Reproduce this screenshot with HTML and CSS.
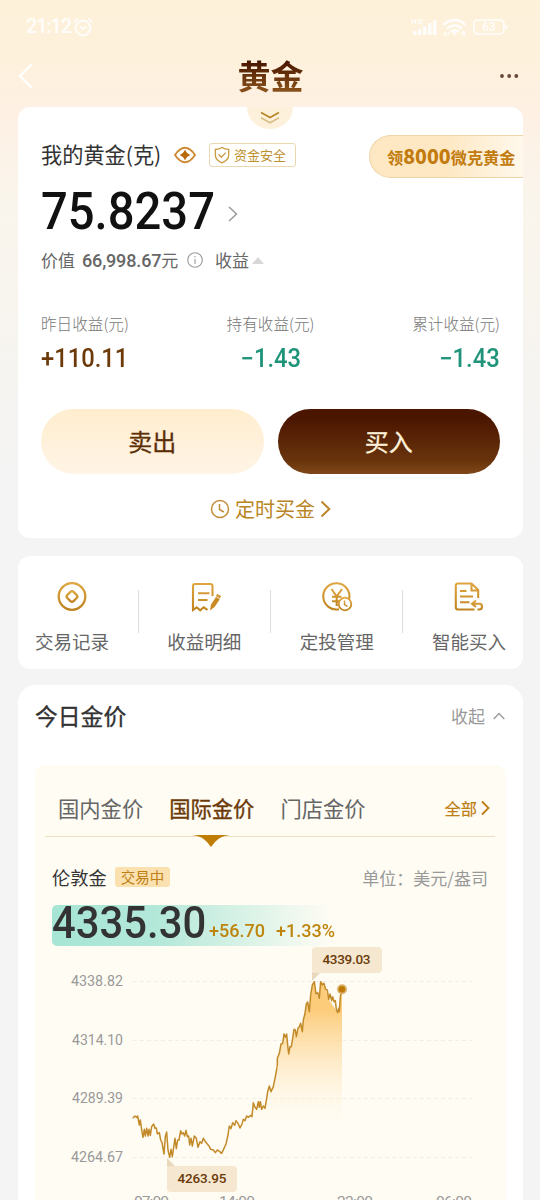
FILE: index.html
```html
<!DOCTYPE html>
<html lang="zh-CN">
<head>
<meta charset="utf-8">
<title>黄金</title>
<link rel="stylesheet" href="styles.css">
</head>
<body>
<svg class="defs" width="0" height="0">
  <defs>
    <linearGradient id="gold" x1="0" y1="0" x2="0" y2="1"><stop offset="0" stop-color="#dfa540"/><stop offset="1" stop-color="#bf8420"/></linearGradient>
  </defs>
</svg>
<div class="screen">
  <div class="status">
    <span class="time">21:12</span>
    <svg class="alarm" width="20" height="20" viewBox="0 0 20 20" fill="none" stroke="#fff" stroke-width="1.8" stroke-linecap="round"><circle cx="10" cy="11" r="7.3"/><path d="M1.2 4.8 4.4 1.8M18.8 4.8 15.6 1.8M7.4 10l2.6 2 2.8-2"/></svg>
    <svg class="signals" width="100" height="22" viewBox="0 0 100 22" fill="#fff">
      <text x="0" y="8" font-size="8" font-weight="700" textLength="12">HD</text>
      <rect x="2" y="15" width="3.500" height="4" rx="1"/><rect x="7" y="13" width="3.500" height="6" rx="1"/><rect x="12" y="10" width="3.500" height="9" rx="1"/><rect x="17" y="7" width="3.500" height="12" rx="1"/><rect x="22" y="4" width="3.500" height="15" rx="1"/>
      <g fill="none" stroke="#fff" stroke-width="2.500"><path d="M32.500 9Q43.500-1 54.500 9M36 12.500q7.500-6.500 15 0M39.500 16q4-3.500 8 0"/></g><circle cx="43.500" cy="17.500" r="1.800"/>
      <text x="32" y="20" font-size="6" font-weight="700">47</text><text x="50" y="20" font-size="8" font-weight="700">6</text>
      <rect x="63" y="4" width="30" height="14" rx="4" fill="none" stroke="#fff" stroke-width="1.700"/><rect x="94.500" y="9" width="2" height="4" rx="1"/>
      <text x="71" y="15.300" font-size="12" font-weight="500">63</text>
    </svg>
  </div>
  <header class="header">
    <svg width="16" height="26" viewBox="0 0 16 26" fill="none" stroke="#fff" stroke-width="2.300"><path d="M13.500 1.200 2 13l11.500 11.700"/></svg>
    <h1 class="title">黄金</h1>
    <svg width="20" height="6" viewBox="0 0 20 6" fill="#674737"><circle cx="3" cy="3" r="1.900"/><circle cx="10.200" cy="3" r="1.900"/><circle cx="17.300" cy="3" r="1.900"/></svg>
  </header>

  <section class="card account">
    <div class="pull"><svg width="20" height="14" viewBox="0 0 20 14" fill="none" stroke-width="1.600"><path d="m1 1.500 9 5 9-5" stroke="#b98422"/><path d="m1 6.800 9 5 9-5" stroke="#d9bd88"/></svg></div>
    <div class="owner">
      <div class="owner-left">
        <span class="owner-name">我的黄金(克)</span>
        <svg class="eye" width="24" height="20" viewBox="0 0 24 20"><path d="M2 10C6 4 9 2.800 12 2.800S18 4 22 10c-4 6-7 7.200-10 7.200S6 16 2 10Z" fill="none" stroke="#ce8a35" stroke-width="1.900"/><path d="M12 5.500 13.700 8.300 16.500 10 13.700 11.700 12 14.500 10.300 11.700 7.500 10 10.300 8.300Z" fill="#b96908" stroke="#b96908"/></svg>
        <span class="safe"><svg width="16" height="18" viewBox="0 0 16 18" fill="none" stroke="#c99b3f" stroke-width="1.300"><path d="M8 1.500Q11 3.400 14.700 3.300V9q0 5-6.700 7.800Q1.300 14 1.300 9V3.300Q5 3.400 8 1.500Z"/><path d="m4.600 8.300 2.700 2.900 4.500-4.600"/></svg><span class="safe-text">资金安全</span></span>
      </div>
      <span class="promo">领<b>8000</b>微克黄金</span>
    </div>
    <div class="balance"><span class="balance-num">75.8237</span><svg width="10" height="16" viewBox="0 0 10 16" fill="none" stroke="#999" stroke-width="1.500"><path d="m1 1 7.500 7L1 15"/></svg></div>
    <div class="worth">
      <span>价值</span><span class="worth-num"><b>66,998.67</b>元</span>
      <svg class="info" width="16" height="16" viewBox="0 0 16 16" fill="none" stroke="#999" stroke-width="1.100"><circle cx="8" cy="8" r="7.300"/><path d="M8 7v5M8 4v1.500"/></svg>
      <span class="gain">收益</span><i class="tri"></i>
    </div>
    <div class="stats">
      <div class="stat"><span class="stat-label">昨日收益(元)</span><span class="stat-num up">+110.11</span></div>
      <div class="stat mid"><span class="stat-label">持有收益(元)</span><span class="stat-num">−1.43</span></div>
      <div class="stat end"><span class="stat-label">累计收益(元)</span><span class="stat-num">−1.43</span></div>
    </div>
    <div class="actions"><div class="btn sell">卖出</div><div class="btn buy">买入</div></div>
    <div class="timed">
      <svg width="20" height="20" viewBox="0 0 20 20" fill="none" stroke="#c18e3a" stroke-width="1.500"><circle cx="10" cy="10" r="8.500"/><path d="M9.500 5v5.500l4.300 2.500"/></svg>
      <span class="timed-text">定时买金</span>
      <svg width="11" height="18" viewBox="0 0 11 18" fill="none" stroke="#bd862b" stroke-width="2"><path d="m1.500 1.500 7.800 7.500-7.800 7.500"/></svg>
    </div>
  </section>

  <section class="card tools">
    <div class="tool">
      <svg width="34" height="34" viewBox="0 0 34 34" fill="none" stroke="url(#gold)" stroke-width="2.300"><circle cx="17" cy="16.500" r="13.300"/><path d="M15.500 11.900q1.500-1.500 3 0l3.200 3.100q1.500 1.500 0 3l-3.200 3.100q-1.500 1.500-3 0L12.300 18q-1.500-1.500 0-3Z"/></svg>
      <span>交易记录</span>
    </div><i class="bar"></i>
    <div class="tool">
      <svg width="34" height="34" viewBox="0 0 34 34" fill="none" stroke="url(#gold)" stroke-width="2.100"><path d="M25.500 16V6q0-2-2-2H8Q6 4 6 6v24l3.700-2.700 3.500 3 3.500-3 3.800 2.500M11 13.200h11.500M11 20h9.500"/><path d="m23 30.500 1-6 5-7.500 3.800 2.200-5.200 7.800Z" fill="#c88a22" stroke="none"/><path d="m29.500 15 4 2.300" stroke="#d59d42" stroke-width="2.700"/></svg>
      <span>收益明细</span>
    </div><i class="bar"></i>
    <div class="tool">
      <svg width="34" height="34" viewBox="0 0 34 34" fill="none" stroke="url(#gold)" stroke-width="2.100"><path d="M19 29.200A13.100 13.100 0 1 1 29.200 19"/><path d="m11.500 9 5.200 7.500L22 9M16.700 16.500v9.500M12 16.700h9.500M12 21.300h9.500"/><circle cx="25" cy="24" r="6.300" fill="#fff" stroke-width="1.800"/><path d="M24.500 20.500v4l3 2" stroke-width="1.500"/></svg>
      <span>定投管理</span>
    </div><i class="bar"></i>
    <div class="tool">
      <svg width="34" height="34" viewBox="0 0 34 34" fill="none" stroke="url(#gold)" stroke-width="2.100"><path d="M22.500 29.500H6Q3.800 29.500 3.800 27.300V5.700Q3.800 3.500 6 3.500H19.500L26.200 10V18M19.500 4v6.500h6.500M8 11h6.500M8 16.500h13M8 22.200h9.500"/><path d="m24 20.500-4 3.200 4 3.300M21 23.700h6.500q2.500 0 2.500 3 0 2.800-3 2.800h-1.500"/></svg>
      <span>智能买入</span>
    </div>
  </section>

  <section class="card market">
    <div class="market-head"><h2>今日金价</h2><span class="fold">收起<svg width="12" height="8" viewBox="0 0 12 8" fill="none" stroke="#999" stroke-width="1.300"><path d="m.7 7 5.300-5.500L11.300 7"/></svg></span></div>
    <div class="panel">
      <div class="tabs">
        <span class="tab">国内金价</span>
        <span class="tab active">国际金价<svg class="notch" width="38" height="12" viewBox="0 0 38 12"><path d="M0 0h38q-10 1-15 7l-4 5-4-5Q10 1 0 0Z" fill="#bf7d06"/></svg></span>
        <span class="tab">门店金价</span>
        <span class="all">全部<svg width="9" height="16" viewBox="0 0 9 16" fill="none" stroke="#bd7e13" stroke-width="1.800"><path d="m1 1.500 6.500 6.500L1 14.500"/></svg></span>
      </div>
      <div class="quote"><span class="quote-name">伦敦金</span><span class="live">交易中</span><span class="unit">单位：美元/盎司</span></div>
      <div class="price"><span class="last">4335.30</span><span class="delta">+56.70</span><span class="delta">+1.33%</span></div>
      <svg class="chart" width="471" height="254" viewBox="0 0 471 254">
        <defs>
          <linearGradient id="areaA" gradientUnits="userSpaceOnUse" x1="0" y1="-150" x2="0" y2="200"><stop offset="0" stop-color="#fccc7b"/><stop offset="1" stop-color="#fff4dc" stop-opacity="0"/></linearGradient>
          <linearGradient id="areaB" gradientUnits="userSpaceOnUse" x1="0" y1="240" x2="0" y2="590"><stop offset="0" stop-color="#fccc7b"/><stop offset="1" stop-color="#fff4dc" stop-opacity="0"/></linearGradient>
        </defs>
        <path d="M98 35.500H437M98 94.500H437M98 152.500H437M98 211.500H437" stroke="#f2eee7" stroke-dasharray="4 3"/>
        <g class="axis">
          <text x="36" y="40" textLength="52" lengthAdjust="spacingAndGlyphs">4338.82</text><text x="37" y="98.500" textLength="51" lengthAdjust="spacingAndGlyphs">4314.10</text><text x="37" y="157" textLength="51" lengthAdjust="spacingAndGlyphs">4289.39</text><text x="36" y="215.500" textLength="52" lengthAdjust="spacingAndGlyphs">4264.67</text>
          <text x="99" y="260.500" textLength="35">07:00</text><text x="184" y="260.500" textLength="36">14:00</text><text x="302" y="260.500" textLength="36">22:00</text><text x="401" y="260.500" textLength="36">06:00</text>
        </g>
        <g transform="scale(.33333)" fill="none" stroke="#c28a28" stroke-width="4.500" stroke-linejoin="round">
          <g transform="translate(15 342)">
            <path stroke="none" fill="url(#areaA)" d="M564 225 568 198 578 190 600 200 620 170 636 170 640 128 650 148 655 125 665 148 675 145 688 78 693 95 700 80 712 18V200H564Z"/>
            <polyline points="278,175 285,168 290,172 293,168 298,195 301,180 305,210 309,232 313,208 316,228 320,205 324,228 327,208 331,226 335,200 341,192 345,205 349,204 352,222 358,218 362,240 366,248 372,282 376,230 380,216 384,270 389,292 393,268 397,290 401,262 405,235 409,266 413,240 417,240 422,212 426,222 430,218 434,228 438,211 442,230 446,228 449,255 453,235 457,258 463,228 469,235 474,262 480,245 485,250 490,235 495,243 500,250 507,258 512,268 520,270 526,278 532,270 538,274 545,280 552,265 558,252 564,225 568,198 573,206 578,188 584,196 588,182 594,190 600,204 606,192 610,178 615,182 620,168 625,172 632,166 636,170 640,128 645,142 650,148 655,125 658,142 661,125 665,148 670,138 675,145 680,115 683,95 688,78 693,95 700,80 705,55 712,18"/>
          </g>
          <g transform="translate(615 -48)">
            <path stroke="none" fill="url(#areaB)" d="M112 408V385L118 370 123 342 128 340 132 312 136 322 140 312 146 372 158 325 162 298 169 320 182 280 187 305 199 222 203 216 208 245 217 165 223 155 228 192 238 205 242 155 252 160 266 208 293 248 298 245 301 200 306 178V590H112Z"/>
            <polyline points="112,408 112,385 118,370 123,342 128,340 132,312 136,322 140,312 143,345 146,372 150,350 154,350 158,325 162,298 166,300 169,320 174,295 178,290 182,280 187,305 190,270 195,250 199,222 203,216 208,245 212,195 217,165 223,155 228,192 233,188 238,205 242,155 247,165 252,160 257,178 262,180 266,208 270,192 275,212 278,200 282,215 286,212 289,238 293,248 296,235 298,245 301,200 306,178"/>
          </g>
        </g>
        <circle cx="307" cy="43.300" r="5" fill="#dbb06a"/><circle cx="307" cy="43.300" r="3.200" fill="#bd7b06"/>
        <g fill="#f5e7d0"><path d="M277 26h9l-9 9Z" fill="#ead8bd"/><rect x="277" y="1" width="70" height="26" rx="4"/><path d="m132 212 9 9h-9Z" fill="#ead8bd"/><rect x="132" y="220" width="70" height="26" rx="4"/></g>
        <g class="mark"><text x="287.500" y="18" textLength="48">4339.03</text><text x="142.500" y="237" textLength="49">4263.95</text></g>
      </svg>
    </div>
  </section>
</div>
</body>
</html>
```
FILE: styles.css
```css
* { box-sizing: border-box; }
html { background: #f4f4f4; }
body { margin: 0; font-family: "Noto Sans CJK SC", sans-serif; color: #333; }
svg { display: block; flex: none; }
.defs { position: absolute; }
.screen {
  width: 540px; height: 1200px; overflow: hidden; padding: 0 17px 0 18px;
  background: linear-gradient(180deg, #fef1da 0, #fef1dc 60px, #fef0e3 110px, #faf5ec 200px, #f4f4f4 480px);
}

.status { height: 54px; display: flex; align-items: center; padding: 0 12px 0 8px; opacity: .92; }
.time { font: 500 19.500px/22px Roboto, sans-serif; letter-spacing: -.900px; color: #fff; width: 47px; }
.signals { margin-left: auto; font-family: Roboto, sans-serif; }
.header { height: 53px; display: flex; align-items: center; justify-content: space-between; padding: 0 4px 9px 0; }
.title {
  margin: -2px 0 0 8px; font-size: 33px; font-weight: 700; line-height: 44px;
  background: linear-gradient(#491700 20%, #87501a 85%); background-clip: text; -webkit-background-clip: text; color: transparent;
}

.card { background: #fff; border-radius: 12px; }
.account { position: relative; height: 431px; padding: 28px 23px 0; }
.pull {
  position: absolute; top: 0; left: 229px; width: 46px; height: 22px;
  border-radius: 0 0 24px 24px; background: #fef1dc; display: flex; justify-content: center; padding-top: 4px;
}
.owner { height: 43px; display: flex; justify-content: space-between; align-items: center; margin-right: -23px; }
.owner-left { display: flex; align-items: center; margin-top: -3px; }
.owner-name { font-size: 21.200px; line-height: 30px; width: 132px; margin-top: -2px; white-space: nowrap; }
.safe {
  display: flex; align-items: center; gap: 4px; width: 87px; height: 24px; margin-left: 12px; padding-left: 4px;
  border: 1px solid #ead9b0; border-radius: 3px; font-size: 13px; color: #bd902e; white-space: nowrap;
}
.safe-text { margin-top: -2px; }
.promo {
  width: 154px; height: 43px; padding-left: 17px; border-radius: 22px 0 0 22px; border: 1px solid #efd5a6; border-right: 0;
  background: linear-gradient(90deg, #fde8c3 50%, #fff8ec); font-size: 16.200px; font-weight: 700; line-height: 39px;
  color: #c27b0f; white-space: nowrap;
}
.promo b { font-size: 19.500px; }
.balance { height: 68px; display: flex; align-items: center; padding-top: 3px; }
.balance-num { font: 500 51px/60px Roboto, sans-serif; transform: scaleX(.925); transform-origin: 0 50%; margin-top: -3px; color: #111; width: 187px; }
.worth { height: 28px; display: flex; align-items: center; font-size: 17px; line-height: 28px; color: #666; white-space: nowrap; }
.worth-num { width: 97px; margin: 0 8px 0 7px; }
.worth-num b { font: 500 18px/28px Roboto, sans-serif; letter-spacing: -.150px; }
.gain { margin-left: 12px; }
.tri { margin-left: 3px; border: 6px solid transparent; border-top: 0; border-bottom: 7px solid #d8d8d8; }
.stats { display: grid; grid-template-columns: 1fr 1fr 1fr; padding-top: 35px; }
.stat { display: flex; flex-direction: column; }
.mid { align-items: center; }
.end { align-items: flex-end; }
.stat-label { font-size: 15.600px; line-height: 28px; font-weight: 300; color: #777; }
.stat-num { font: 500 25px/38px Roboto, sans-serif; margin-top: 3px; transform: scaleX(.95); transform-origin: 50% 50%; color: #20947a; }
.up { color: #6b3a08; transform-origin: 0 50%; }
.end .stat-num { transform-origin: 100% 50%; }
.actions { display: grid; grid-template-columns: 1fr 1fr; gap: 14px; margin-top: 31px; }
.btn { height: 65px; border-radius: 33px; text-align: center; font-size: 24px; line-height: 64px; -webkit-text-stroke: .3px; }
.sell { background: linear-gradient(#ffedce, #fff4e6); color: #5b2e05; }
.buy { background: linear-gradient(#4b1600 15%, #69340c 80%, #804819); color: #fff1d9; }
.timed { height: 64px; padding-top: 6px; display: flex; align-items: center; justify-content: center; gap: 5px; font-size: 20px; color: #b98425; }
.timed-text { margin-top: -2px; }

.tools { height: 113px; margin-top: 17.500px; padding: 24.500px 17px 0; display: flex; justify-content: space-between; }
.tool { display: flex; flex-direction: column; align-items: center; gap: 13px; font-size: 18.500px; line-height: 28px; color: #666; white-space: nowrap; }
.bar { width: 1px; height: 43px; margin-top: 10px; background: #ddd; }

.market { height: 540px; margin-top: 16.500px; padding: 0 17px; border-radius: 18px; }
.market-head { height: 80px; padding-bottom: 19px; display: flex; align-items: center; justify-content: space-between; }
h2 { margin: 0; font-size: 22.800px; font-weight: 400; -webkit-text-stroke: .35px; }
.fold { display: flex; align-items: center; gap: 8px; font-size: 17px; color: #999; padding-right: 1px; }
.panel { height: 460px; padding: 0 11px 0 10px; background: #fffcf4; border-radius: 10px; }
.tabs { height: 72px; padding: 14px 5px 0 13px; display: flex; align-items: center; gap: 26px; border-bottom: 1px solid #eadfbf; font-size: 21.300px; color: #666; white-space: nowrap; }
.active { position: relative; color: #6b3a08; -webkit-text-stroke: .35px; }
.notch { position: absolute; left: 23px; top: 43px; }
.all { margin-left: auto; display: flex; align-items: center; gap: 4px; font-size: 16.300px; color: #bd7e13; -webkit-text-stroke: .2px; }
.quote { height: 68px; padding: 12px 7px 0 7px; display: flex; align-items: center; font-size: 18.300px; }
.live { margin-left: 8px; width: 55px; height: 20px; border-radius: 3px; background: #fbe1af; color: #bd7e13; font-size: 14.500px; line-height: 19px; text-align: center; }
.unit { margin-left: auto; font-size: 17px; color: #999; }
.quote-name { width: 55px; margin-top: -1px; white-space: nowrap; }
.price { height: 41px; margin-left: 7px; display: flex; border-radius: 5px; white-space: nowrap; font-family: Roboto, sans-serif; background: linear-gradient(90deg, #a6e5d5, #b3e8d9 105px, #fffcf4 280px); }
.last { width: 157px; font-size: 44px; font-weight: 500; line-height: 37px; transform: scaleX(.95); transform-origin: 0 50%; }
.delta { font-size: 19px; font-weight: 500; line-height: 51px; transform: scaleX(.95); transform-origin: 0 50%; color: #bd850e; width: 67px; }
.chart { margin-left: -10px; font-family: Roboto, sans-serif; }
.axis { font-size: 15.500px; fill: #999; }
.mark { font-size: 13.500px; font-weight: 500; fill: #6b3a08; }
```
